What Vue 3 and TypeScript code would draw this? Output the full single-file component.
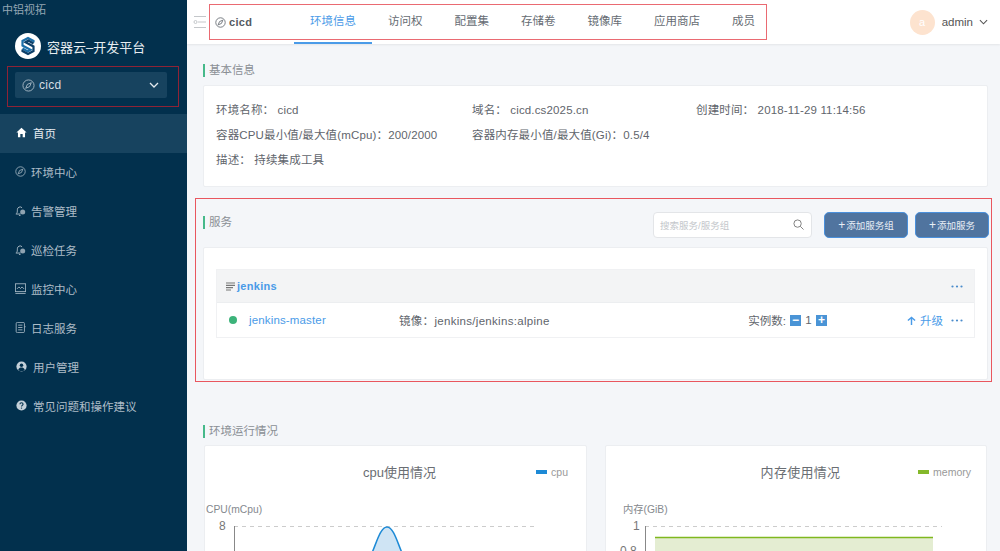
<script setup lang="ts">
const menu = [
  { label: "首页", icon: "home", active: true },
  { label: "环境中心", icon: "compass" },
  { label: "告警管理", icon: "bell" },
  { label: "巡检任务", icon: "bell" },
  { label: "监控中心", icon: "monitor" },
  { label: "日志服务", icon: "log" },
  { label: "用户管理", icon: "user" },
  { label: "常见问题和操作建议", icon: "help" },
];
const wideIcons = ["home", "user", "help"];
const tabs = ["环境信息", "访问权", "配置集", "存储卷", "镜像库", "应用商店", "成员"];
</script>

<template>
  <div class="page">
    <aside class="side">
      <div class="corp">中铝视拓</div>
      <div class="brand">
        <svg class="logo" width="26" height="26" viewBox="0 0 26 26">
          <circle cx="13" cy="13" r="13" fill="#fff" />
          <path d="M18.500 9.500V8L13 5 7.500 8v4.500l8 4.300-2.800 1.600-5.200-2.900" fill="none" stroke="#1b6ea8" stroke-width="2.200" />
          <path d="M7.500 16.500V18l5.500 3 5.500-3v-4.500l-8-4.300 2.800-1.600 5.200 2.900" fill="none" stroke="#0d3f68" stroke-width="2.200" />
        </svg>
        <span>容器云–开发平台</span>
      </div>
      <div class="env">
        <svg width="13" height="13" viewBox="0 0 14 14" fill="none" stroke="#a9bac6" stroke-width="1">
          <circle cx="7" cy="7" r="6" />
          <path d="M10 4L8.200 8.200 4 10l1.800-4.200z" />
        </svg>
        <span class="env-name">cicd</span>
        <svg class="chev" width="10" height="6" viewBox="0 0 10 6" fill="none" stroke="#e4eaef" stroke-width="1.300">
          <path d="M1 1l4 4 4-4" />
        </svg>
      </div>
      <nav class="menu">
        <div
          v-for="m in menu"
          :key="m.label"
          class="item"
          :class="{ active: m.active, wide: wideIcons.includes(m.icon) }"
        >
          <svg class="mi" width="11" height="11" viewBox="0 0 14 14">
            <path v-if="m.icon === 'home'" d="M7 1L0.500 7H2.500V13H5.500V9H8.500V13H11.500V7H13.500z" fill="#fff" />
            <g v-else-if="m.icon === 'compass'" fill="none" stroke="#a9bac6" stroke-width="1">
              <circle cx="7" cy="7" r="6" />
              <path d="M10 4L8.200 8.200 4 10l1.800-4.200z" />
            </g>
            <g v-else-if="m.icon === 'bell'" fill="none" stroke="#a9bac6" stroke-width="1.200">
              <path d="M2 11c1-1.200 1-3 1-5a3.500 3.500 0 0 1 6-2.500" />
              <path d="M1 11.500h6M5 13.300h2" />
              <circle cx="9.800" cy="9" r="3.200" fill="#8fa3b1" stroke="none" />
            </g>
            <g v-else-if="m.icon === 'monitor'" fill="none" stroke="#a9bac6" stroke-width="1.100">
              <rect x="0.500" y="1" width="13" height="10" />
              <path d="M0.500 13.300h13M2.500 7.500l2.500-2.500 2 2 2-2 2.500 2.500" />
            </g>
            <g v-else-if="m.icon === 'log'" fill="none" stroke="#a9bac6" stroke-width="1.100">
              <rect x="1.500" y="0.500" width="10.500" height="13" rx="1.500" />
              <path d="M4 4h5.500M4 7h5.500M4 10h5.500M12 6h1.500" />
            </g>
            <g v-else-if="m.icon === 'user'">
              <circle cx="7" cy="7" r="6.500" fill="#c4d0d9" />
              <circle cx="7" cy="5.300" r="2.200" fill="#02304d" />
              <path d="M2.800 11c.8-2 2.400-2.800 4.200-2.800s3.400.8 4.200 2.800a5.500 5.500 0 0 1-8.400 0z" fill="#02304d" />
            </g>
            <g v-else>
              <circle cx="7" cy="7" r="6.500" fill="#c4d0d9" />
              <path d="M5 5.400c0-2.600 4-2.600 4 0 0 1.500-2 1.500-2 3" fill="none" stroke="#02304d" stroke-width="1.400" />
              <circle cx="7" cy="10.300" r=".9" fill="#02304d" />
            </g>
          </svg>
          <span>{{ m.label }}</span>
        </div>
      </nav>
    </aside>

    <div class="main">
      <header class="top">
        <svg class="fold" width="14" height="14" viewBox="0 0 14 14" fill="none" stroke="#c4c7ca" stroke-width="1">
          <path d="M1 1.500h12M1 12.500h12M5 7h8" />
          <circle cx="2.500" cy="7" r="1.500" />
        </svg>
        <div class="crumb">
          <svg width="11" height="11" viewBox="0 0 14 14" fill="none" stroke="#666c73" stroke-width="1.100">
            <circle cx="7" cy="7" r="6" />
            <path d="M10 4L8.200 8.200 4 10l1.800-4.200z" />
          </svg>
          <b>cicd</b>
        </div>
        <div class="tabs">
          <div v-for="(t, i) in tabs" :key="t" class="tab" :class="{ on: i === 0 }">{{ t }}</div>
        </div>
        <div class="user">
          <span class="avatar">a</span>
          <span class="uname">admin</span>
          <svg width="9" height="6" viewBox="0 0 10 6" fill="none" stroke="#555" stroke-width="1.200">
            <path d="M1 1l4 4 4-4" />
          </svg>
        </div>
      </header>

      <section class="content">
        <h3 class="title first">基本信息</h3>
        <div class="card info">
          <div class="info-row">
            <span class="c1">环境名称：&nbsp;cicd</span>
            <span class="c2">域名：&nbsp;cicd.cs2025.cn</span>
            <span>创建时间：&nbsp;2018-11-29 11:14:56</span>
          </div>
          <div class="info-row">
            <span class="c1">容器CPU最小值/最大值(mCpu)：200/2000</span>
            <span class="c2">容器内存最小值/最大值(Gi)：0.5/4</span>
          </div>
          <div class="info-row">
            <span>描述：&nbsp;持续集成工具</span>
          </div>
        </div>

        <div class="svc-head">
          <h3 class="title svc-title">服务</h3>
          <div class="search">
            <span>搜索服务/服务组</span>
            <svg width="11" height="11" viewBox="0 0 12 12" fill="none" stroke="#777" stroke-width="1">
              <circle cx="5" cy="5" r="4" />
              <path d="M8 8l3.500 3.500" />
            </svg>
          </div>
          <button class="btn group-btn"><span class="plus">+</span>添加服务组</button>
          <button class="btn"><span class="plus">+</span>添加服务</button>
        </div>
        <div class="card svc">
          <div class="group">
            <div class="group-head">
              <svg width="9" height="9" viewBox="0 0 9 9" stroke="#777" stroke-width="1.200">
                <path d="M0 1h9M0 3.300h9M0 5.600h7M0 8h5" />
              </svg>
              <b>jenkins</b>
              <svg class="dots" width="12" height="3" viewBox="0 0 12 3" fill="#4a8ccc">
                <circle cx="1.500" cy="1.500" r="1.100" />
                <circle cx="6" cy="1.500" r="1.100" />
                <circle cx="10.500" cy="1.500" r="1.100" />
              </svg>
            </div>
            <div class="group-row">
              <i class="dot"></i>
              <a class="link">jenkins-master</a>
              <span class="image">镜像：jenkins/jenkins:alpine</span>
              <span class="count">实例数:</span>
              <i class="step">−</i>
              <span class="num">1</span>
              <i class="step">+</i>
              <span class="up">
                <svg width="9" height="9" viewBox="0 0 10 10" fill="none" stroke="#4a9be8" stroke-width="1.600">
                  <path d="M1 5l4-3.500L9 5M5 2v8" />
                </svg>
                升级
              </span>
              <svg class="dots" width="12" height="3" viewBox="0 0 12 3" fill="#4a8ccc">
                <circle cx="1.500" cy="1.500" r="1.100" />
                <circle cx="6" cy="1.500" r="1.100" />
                <circle cx="10.500" cy="1.500" r="1.100" />
              </svg>
            </div>
          </div>
        </div>

        <h3 class="title run">环境运行情况</h3>
        <div class="charts">
          <div class="card chart">
            <div class="chart-title">cpu使用情况</div>
            <div class="legend"><i class="blue"></i>cpu</div>
            <div class="axis-name">CPU(mCpu)</div>
            <div class="plot">
              <span class="tick">8</span>
              <svg class="plot-svg" width="372" height="30" viewBox="0 0 372 30">
                <path d="M29 1.500H333" stroke="#ccc" stroke-dasharray="4 4" fill="none" />
                <path d="M29.500 1v29" stroke="#888" fill="none" />
                <path d="M166 30c5-10 9-28 16-28s11 18 16 28z" fill="#cfe4f4" />
                <path d="M166 30c5-10 9-28 16-28s11 18 16 28" stroke="#1d8ad6" stroke-width="1.500" fill="none" />
              </svg>
            </div>
          </div>
          <div class="card chart mem-chart">
            <div class="chart-title mem">内存使用情况</div>
            <div class="legend"><i class="green"></i>memory</div>
            <div class="axis-name mem-axis">内存(GiB)</div>
            <div class="plot">
              <span class="tick mem-tick">1</span>
              <span class="tick mem-tick2">0.8</span>
              <svg class="plot-svg" width="372" height="30" viewBox="0 0 372 30">
                <path d="M39 1.500H336" stroke="#ccc" stroke-dasharray="4 4" fill="none" />
                <path d="M39.500 1v29" stroke="#888" fill="none" />
                <rect x="49" y="13" width="278" height="17" fill="#e4edd2" />
                <path d="M49 12.500H327" stroke="#7fb81f" stroke-width="1.500" />
              </svg>
            </div>
          </div>
        </div>
      </section>
    </div>

    <!-- red annotation frames drawn on top of the screenshot -->
    <div class="mark mark-env"></div>
    <div class="mark mark-tabs"></div>
    <div class="mark mark-svc"></div>
  </div>
</template>

<style>
html,
body {
  margin: 0;
  height: 100%;
  overflow: hidden;
}
</style>

<style scoped>
.page {
  position: relative;
  display: flex;
  width: 1000px;
  height: 551px;
  overflow: hidden;
  font-family: "Liberation Sans", "Noto Sans CJK SC", sans-serif;
  font-size: 12px;
  color: #5f656c;
  background: #f4f6f9;
}
.side {
  flex: 0 0 187px;
  background: #02304d;
  color: #aebdc8;
}
.corp {
  padding: 3px 0 0 2px;
  height: 13px;
  line-height: 15px;
  font-size: 11px;
  color: #94a6b3;
}
.brand {
  display: flex;
  align-items: center;
  gap: 6px;
  padding: 17px 0 0 15px;
  color: #e6ecf0;
  font-size: 13px;
}
.env {
  display: flex;
  align-items: center;
  margin: 13px 20px 0 15px;
  height: 26px;
  padding: 0 8px 0 7px;
  background: #17435f;
  border-radius: 2px;
  color: #d5dee4;
}
.env-name {
  margin-left: 4px;
  font-size: 12px;
  letter-spacing: 0.3px;
}
.chev {
  margin-left: auto;
}
.menu {
  margin-top: 16px;
}
.item {
  display: flex;
  align-items: center;
  box-sizing: border-box;
  height: 39px;
  gap: 5px;
  padding: 0 0 2px 15px;
  font-size: 11.500px;
}
.item.wide {
  gap: 6px;
  padding-left: 16px;
}
.item.active {
  background: #17435f;
  color: #e8edf1;
}
.main {
  flex: 1;
  min-width: 0;
}
.top {
  display: flex;
  align-items: center;
  height: 44px;
  background: #fff;
  box-shadow: 0 1px 2px rgba(0, 0, 0, 0.07);
  position: relative;
}
.fold {
  margin-left: 6px;
}
.crumb {
  display: flex;
  align-items: center;
  gap: 3px;
  width: 79px;
  margin-left: 8px;
  color: #555b62;
  font-size: 11px;
  letter-spacing: 0.3px;
}
.tabs {
  display: flex;
}
.tab {
  height: 44px;
  padding: 0 16px;
  line-height: 42px;
  font-size: 11.500px;
  color: #666c73;
  box-sizing: border-box;
}
.tab.on {
  color: #4a9be8;
  border-bottom: 2px solid #4a9be8;
}
.user {
  display: flex;
  align-items: center;
  margin-left: auto;
  margin-right: 12px;
  gap: 6px;
  color: #555;
  font-size: 11.500px;
}
.avatar {
  width: 25px;
  height: 25px;
  line-height: 25px;
  margin-right: 1px;
  border-radius: 50%;
  background: #fde3cf;
  color: #fff;
  text-align: center;
  font-size: 11px;
}
.content {
  padding: 0 11px 0 16px;
}
.title {
  margin: 0;
  height: 13px;
  line-height: 13px;
  font-weight: normal;
  font-size: 11.500px;
  color: #8a8f95;
  padding-left: 4px;
  border-left: 2px solid #46b98a;
}
.title.first {
  margin-top: 20px;
}
.title.svc-title {
  margin-bottom: 4px;
}
.title.run {
  margin-top: 45px;
}
.card {
  background: #fff;
  border: 1px solid #eceef1;
  border-radius: 2px;
  box-sizing: border-box;
}
.info {
  margin: 8px 1px 0 0;
  height: 102px;
  padding: 12px 12px;
  font-size: 11.500px;
}
.info-row {
  display: flex;
  height: 25px;
  line-height: 25px;
  letter-spacing: 0.15px;
}
.c1 {
  width: 256px;
}
.c2 {
  width: 224px;
}
.svc-head {
  display: flex;
  align-items: center;
  margin-top: 24px;
  height: 27px;
}
.search {
  display: flex;
  align-items: center;
  justify-content: space-between;
  box-sizing: border-box;
  width: 159px;
  height: 26px;
  margin-left: auto;
  padding: 0 7px 0 6px;
  background: #fff;
  border: 1px solid #e3e5e8;
  border-radius: 4px;
  color: #c4c7cb;
  font-size: 9.500px;
}
.btn {
  width: 74px;
  height: 26px;
  margin-left: 7px;
  padding: 0;
  background: #50749f;
  border: 1px solid #4a90dc;
  border-radius: 5px;
  color: #e8eef5;
  font: 9.500px "Liberation Sans", "Noto Sans CJK SC", sans-serif;
}
.plus {
  margin-right: 1px;
  font-size: 12px;
}
.btn.group-btn {
  width: 84px;
  margin-left: 12px;
}
.svc {
  margin: 9px 1px 0 0;
  height: 133px;
  padding: 21px 12px 0 12px;
}
.group {
  border: 1px solid #f0f1f3;
}
.group-head {
  display: flex;
  align-items: center;
  box-sizing: border-box;
  height: 33px;
  padding: 0 11px 0 9px;
  gap: 2px;
  background: #f3f4f5;
  border-bottom: 1px solid #eceef0;
}
.group-head b {
  color: #4a9be8;
  font-size: 11px;
  letter-spacing: 0.3px;
}
.group-row {
  display: flex;
  align-items: center;
  height: 34px;
  padding: 0 11px 0 12px;
  font-size: 11.500px;
}
.dots {
  margin-left: auto;
}
.group-row .dots {
  margin-left: 8px;
}
.dot {
  width: 8px;
  height: 8px;
  border-radius: 50%;
  background: #3cb37a;
}
.link {
  margin-left: 12px;
  width: 150px;
  color: #4a9be8;
  letter-spacing: 0.15px;
}
.image {
  letter-spacing: 0.3px;
}
.count {
  margin-left: auto;
  margin-right: 4px;
}
.step {
  width: 11px;
  height: 11px;
  line-height: 10px;
  text-align: center;
  background: #4a94d6;
  color: #fff;
  font-style: normal;
  font-size: 12px;
  font-weight: bold;
}
.num {
  width: 15px;
  text-align: center;
}
.up {
  display: flex;
  align-items: center;
  gap: 4px;
  margin-left: 80px;
  color: #4a9be8;
}
.charts {
  display: flex;
  gap: 18px;
  margin: 7px 0 0 1px;
}
.chart {
  position: relative;
  width: 383px;
  height: 200px;
  flex: none;
}
.mem-chart {
  width: 382px;
}
.chart-title {
  padding: 18px 0 0 8px;
  text-align: center;
  font-size: 13px;
  line-height: 17px;
  color: #6a6e73;
}
.chart-title.mem {
  padding-left: 9px;
  letter-spacing: 0.3px;
}
.legend {
  position: absolute;
  top: 20px;
  right: 18px;
  display: flex;
  align-items: center;
  gap: 4px;
  font-size: 10.500px;
  color: #999;
}
.mem-chart .legend {
  right: 15px;
}
.legend i {
  width: 11px;
  height: 4px;
}
.blue {
  background: #1d8ad6;
}
.green {
  background: #84b82a;
}
.axis-name {
  margin: 23px 0 0 1px;
  font-size: 10.300px;
  line-height: 12px;
  color: #85898e;
}
.mem-axis {
  margin-left: 17px;
}
.plot {
  position: relative;
  margin-top: 9px;
  height: 30px;
}
.plot-svg {
  display: block;
}
.tick {
  position: absolute;
  left: 14px;
  top: -6px;
  font-size: 12px;
  color: #777;
}
.mem-tick {
  left: 27px;
}
.mem-tick2 {
  left: 14px;
  top: 19px;
}
.mark {
  position: absolute;
  box-sizing: border-box;
  border: 1px solid #d9434f;
  pointer-events: none;
}
.mark-env {
  left: 7px;
  top: 66px;
  width: 172px;
  height: 41px;
  border-color: #8e2336;
}
.mark-tabs {
  left: 209px;
  top: 4px;
  width: 558px;
  height: 36px;
  border-color: #ea6a72;
}
.mark-svc {
  left: 195px;
  top: 198px;
  width: 797px;
  height: 184px;
  border-color: #e9565f;
}
</style>
